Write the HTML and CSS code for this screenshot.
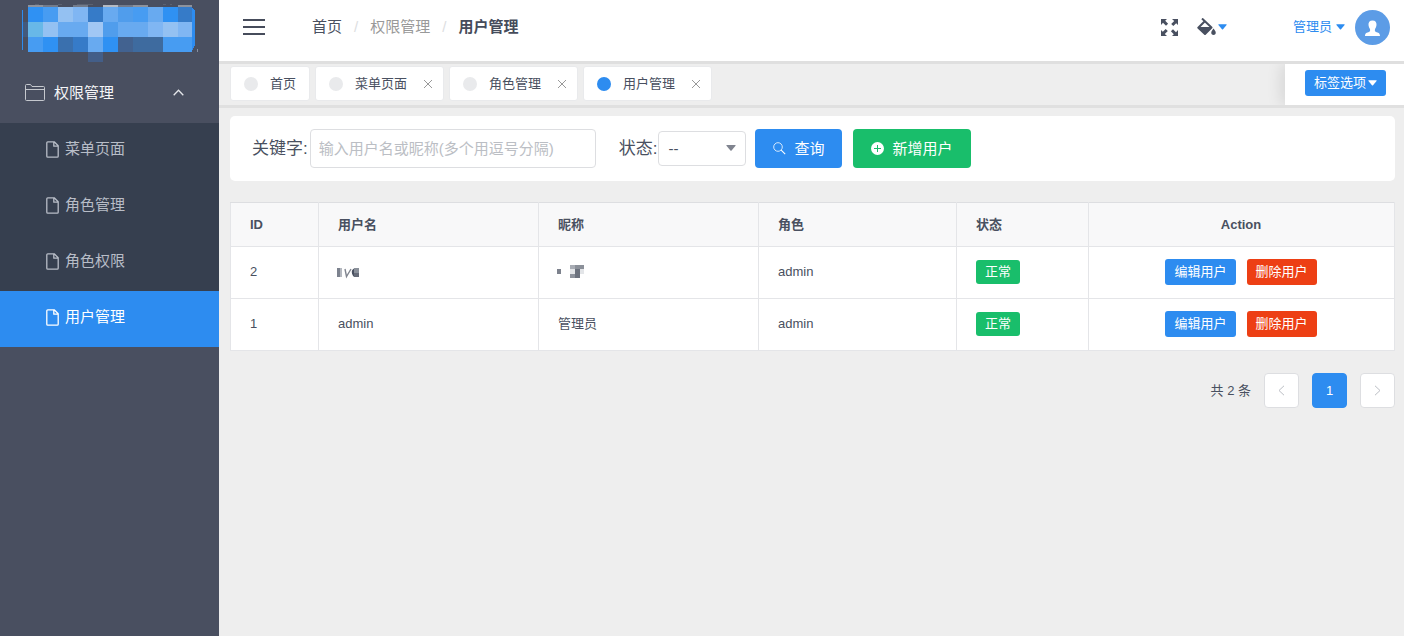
FILE: index.html
```html
<!DOCTYPE html>
<html lang="zh-CN">
<head>
<meta charset="utf-8">
<meta name="viewport" content="width=device-width, initial-scale=1">
<title>用户管理</title>
<link rel="stylesheet" href="styles.css">
</head>
<body>
<svg class="defs" width="0" height="0" aria-hidden="true">
  <symbol id="file" viewBox="0 0 13 17"><path d="M1.700.8h6.500l4 4v10.400q0 1-1 1H1.800q-1 0-1-1V1.800q0-1 1-1zM7.800.8v4.400h4.400" fill="none" stroke="currentColor" stroke-width="1.300" stroke-linejoin="round"/></symbol>
  <symbol id="caret" viewBox="0 0 10 6"><path d="M.8 0h8.400q.8 0 .3.700L5.600 5.500q-.6.600-1.200 0L.5.700Q0 0 .8 0z" fill="currentColor"/></symbol>
  <symbol id="close" viewBox="0 0 10 10"><path d="M1 1l8 8M9 1L1 9" fill="none" stroke="currentColor" stroke-width="1"/></symbol>
</svg>
<div class="layout">
  <aside class="sidebar">
    <div class="logo">
      <svg width="180" height="62" viewBox="22 0 180 62" shape-rendering="crispEdges" role="img" aria-label="logo">
        <path d="M22 10h1v40h-1zM192 7l3 4v34l-3 6z" fill="#2d8cf0"/>
        <path d="M197 49h1v3h-1z" fill="#8790a0"/>
        <path d="M35 4h4v1h-4zM58 4h4v1h-4zM77 4h16v1H77zM163 4h3v1h-3zM170 4h2v1h-2z" fill="#5b6272"/>
        <path d="M28 5h15v2H28zM133 5h15v2h-15zM178 5h14v2h-14z" fill="#8d929c"/>
        <path d="M43 5h15v2H43zM73 5h15v2H73zM118 5h15v2h-15z" fill="#737b8a"/>
        <path d="M103 5h15v2h-15z" fill="#b5bac2"/>
        <path d="M28 7h15v15H28zM163 7h15v15h-15zM103 37h15v15h-15zM43 37h15v15H43z" fill="#2f91f3"/>
        <path d="M43 7h15v15H43zM133 7h15v15h-15zM28 37h15v15H28zM163 37h29v15h-29z" fill="#479cf2"/>
        <path d="M58 7h15v15H58zM43 22h15v15H43zM163 22h15v15h-15z" fill="#94c1f2"/>
        <path d="M73 7h15v15H73zM148 22h15v15h-15zM178 22h14v15h-14z" fill="#80b6f3"/>
        <path d="M88 7h15v15H88zM178 7h14v15h-14zM73 37h15v15H73z" fill="#367bc8"/>
        <path d="M103 7h15v15h-15zM148 7h15v15h-15zM58 22h30v15H58zM118 22h30v15h-30zM88 37h15v15H88z" fill="#68aaf0"/>
        <path d="M118 7h15v15h-15zM103 22h15v15h-15z" fill="#509dec"/>
        <path d="M28 22h15v15H28z" fill="#68b8e8"/><path d="M23 22h5v15h-5z" fill="#435a7c"/>
        <path d="M88 22h15v15H88z" fill="#a1c7f4"/><path d="M58 37h15v15H58z" fill="#3a70ae"/>
        <path d="M118 37h15v15h-15z" fill="#426290"/><path d="M133 37h30v15h-30z" fill="#3e6b9f"/>
        <path d="M88 52h15v10H88z" fill="#435e88"/>
      </svg>
    </div>
    <nav>
      <button class="menu-title" type="button" aria-expanded="true">
        <svg width="20" height="17" viewBox="0 0 20 17"><path d="M.5 15.500V1.500q0-1 1-1h4l1.500 2h11.500q1 0 1 1V15.500q0 1-1 1h-17q-1 0-1-1zM.5 5.500h19" fill="none" stroke="currentColor"/></svg>
        <span>权限管理</span>
        <svg class="menu-arrow" width="11" height="7" viewBox="0 0 11 7"><path d="M.7 6.200l4.800-5 4.800 5" fill="none" stroke="currentColor" stroke-width="1.300"/></svg>
      </button>
      <ul class="submenu">
        <li><a href="#"><svg width="13" height="17"><use href="#file"/></svg>菜单页面</a></li>
        <li><a href="#"><svg width="13" height="17"><use href="#file"/></svg>角色管理</a></li>
        <li><a href="#"><svg width="13" height="17"><use href="#file"/></svg>角色权限</a></li>
        <li><a href="#" class="active" aria-current="page"><svg width="13" height="17"><use href="#file"/></svg>用户管理</a></li>
      </ul>
    </nav>
  </aside>

  <div class="main">
    <header class="header">
      <button class="icon-btn" type="button" aria-label="折叠菜单">
        <svg width="22" height="16" viewBox="0 0 22 16"><path d="M0 1h22M0 8h22M0 15h22" stroke="#464c5b" stroke-width="2"/></svg>
      </button>
      <nav class="breadcrumb" aria-label="面包屑">
        <a href="#" class="crumb-link">首页</a><span class="sep">/</span><span class="crumb">权限管理</span><span class="sep">/</span><strong>用户管理</strong>
      </nav>
      <div class="tools">
        <button class="icon-btn" type="button" aria-label="全屏">
          <svg width="17" height="17" viewBox="0 0 17 17" fill="#495060"><path id="c" d="M0 0h6L4.200 1.800l2.900 2.900-2.100 2.100-3-3L0 6z"/><use href="#c" transform="rotate(90 8.500 8.500)"/><use href="#c" transform="rotate(180 8.500 8.500)"/><use href="#c" transform="rotate(270 8.500 8.500)"/></svg>
        </button>
        <button class="icon-btn theme" type="button" aria-label="主题">
          <svg width="20" height="18" viewBox="0 0 20 18"><path d="M5 .5L14.500 9.500 8 16 1.300 9.700l6-6" fill="none" stroke="#495060" stroke-width="2" stroke-linejoin="round"/><path d="M1 9h13.500L8 16.500z" fill="#495060"/><path d="M16.500 10.500q3 3.500 2 5.400-2 2-4 0-1-1.900 2-5.400z" fill="#495060"/></svg>
          <svg class="blue" width="9" height="6"><use href="#caret"/></svg>
        </button>
        <button class="user" type="button">管理员<svg width="9" height="6"><use href="#caret"/></svg></button>
        <svg class="avatar" width="35" height="35" viewBox="0 0 35 35"><circle cx="17.500" cy="17.500" r="17.500" fill="#5c9ce6"/><path d="M17.500 10.500c3 0 4.200 2 4 4.500-.2 2-1 3-1.500 4.200-.3 1.500-.1 2.300 1 2.800 2 .8 4 .8 4 4H10c0-3.200 2-3.200 4-4 1.100-.5 1.300-1.300 1-2.800-.5-1.200-1.300-2.200-1.500-4.200-.2-2.500 1-4.500 4-4.500z" fill="#fff"/></svg>
      </div>
    </header>

    <div class="tabbar">
      <div class="tabs">
        <div class="tab"><span class="dot"></span><a href="#">首页</a></div>
        <div class="tab"><span class="dot"></span><a href="#">菜单页面</a><button type="button" aria-label="关闭菜单页面"><svg width="10" height="10"><use href="#close"/></svg></button></div>
        <div class="tab"><span class="dot"></span><a href="#">角色管理</a><button type="button" aria-label="关闭角色管理"><svg width="10" height="10"><use href="#close"/></svg></button></div>
        <div class="tab"><span class="dot on"></span><a href="#">用户管理</a><button type="button" aria-label="关闭用户管理"><svg width="10" height="10"><use href="#close"/></svg></button></div>
      </div>
      <div class="tab-options"><button class="btn small primary" type="button">标签选项<svg width="9" height="6"><use href="#caret"/></svg></button></div>
    </div>

    <main class="content">
      <form class="search">
        <label for="kw">关键字:</label>
        <input id="kw" type="text" placeholder="输入用户名或昵称(多个用逗号分隔)">
        <label class="state-label" for="state">状态:</label>
        <span class="select"><select id="state"><option>--</option></select><svg width="10" height="6"><use href="#caret"/></svg></span>
        <button class="btn large primary" type="button"><svg width="13" height="13" viewBox="0 0 13 13"><circle cx="5" cy="5" r="4.300" fill="none" stroke="currentColor" stroke-width=".8"/><path d="M8.200 8.200l4 4" stroke="currentColor" stroke-width="1.100"/></svg>查询</button>
        <button class="btn large success" type="button"><svg width="13" height="13" viewBox="0 0 13 13"><circle cx="6.500" cy="6.500" r="6.500" fill="#fff"/><path d="M6.500 3v7M3 6.500h7" stroke="#19be6b" stroke-width="1"/></svg>新增用户</button>
      </form>

      <table class="table">
        <colgroup><col class="c-id"><col class="c-name"><col class="c-name"><col class="c-role"><col class="c-state"><col></colgroup>
        <thead><tr><th>ID</th><th>用户名</th><th>昵称</th><th>角色</th><th>状态</th><th class="center">Action</th></tr></thead>
        <tbody>
          <tr>
            <td>2</td>
            <td><svg class="mask" width="24" height="14" viewBox="0 0 24 14"><path d="M0 3h3v9H0z" fill="#7c828e"/><path d="M3 3h2v9H3z" fill="#b4b8bf"/><path d="M8 4l1.500 7.500L14 4" fill="none" stroke="#80858f" stroke-width="1.400"/><path d="M17 3.500q-3 1.500-2 5t3 3.500z" fill="#495060"/><path d="M17 3h5v5h-5z" fill="#8a909a"/><path d="M17 8h5v4h-5z" fill="#656b78"/></svg></td>
            <td><svg class="mask" width="28" height="16" viewBox="0 0 28 16" shape-rendering="crispEdges"><path d="M0 5h4v5H0z" fill="#7d828d"/><path d="M13 1h5v4h-5z" fill="#a8acb4"/><path d="M18 1h9v4h-9z" fill="#8b9099"/><path d="M13 5h5v5h-5zM23 5h4v5h-4z" fill="#e3e5e8"/><path d="M18 5h5v9h-5z" fill="#6b717d"/><path d="M13 10h5v4h-5z" fill="#8d929c"/></svg></td>
            <td>admin</td><td><span class="tag">正常</span></td>
            <td><div class="actions"><button class="btn small primary" type="button">编辑用户</button><button class="btn small error" type="button">删除用户</button></div></td>
          </tr>
          <tr>
            <td>1</td><td>admin</td><td>管理员</td><td>admin</td><td><span class="tag">正常</span></td>
            <td><div class="actions"><button class="btn small primary" type="button">编辑用户</button><button class="btn small error" type="button">删除用户</button></div></td>
          </tr>
        </tbody>
      </table>

      <nav class="pager" aria-label="分页">
        <span>共 2 条</span>
        <button type="button" aria-label="上一页" disabled><svg width="7" height="11" viewBox="0 0 7 11"><path d="M6 .8L1 5.500l5 4.700" fill="none" stroke="currentColor"/></svg></button>
        <button type="button" class="current">1</button>
        <button type="button" aria-label="下一页" disabled><svg width="7" height="11" viewBox="0 0 7 11"><path d="M1 .8l5 4.700-5 4.700" fill="none" stroke="currentColor"/></svg></button>
      </nav>
    </main>
  </div>
</div>
</body>
</html>
```
FILE: styles.css
```css
* { box-sizing: border-box; }
body {
  margin: 0;
  color: #495060;
  background: #eee;
  font: 13px/20px "Liberation Sans", "Noto Sans CJK SC", sans-serif;
}
button, input, select { font: inherit; color: inherit; margin: 0; }
button { border: 0; padding: 0; background: none; cursor: pointer; }
a { color: inherit; text-decoration: none; }
ul { list-style: none; margin: 0; padding: 0; }
svg { display: block; flex: none; }
.defs { position: absolute; }

.layout { display: flex; min-height: 100vh; }
.sidebar { flex: 0 0 219px; background: #494f60; }
.logo { height: 62px; padding-left: 22px; }
.menu-title {
  display: flex;
  align-items: center;
  width: 100%;
  height: 61px;
  padding: 0 35px 0 25px;
  gap: 9px;
  color: #f5f6f8;
  font-size: 15px;
}
.menu-title svg { color: #c5c8ce; }
.menu-title .menu-arrow { margin-left: auto; color: #e4e6ea; }
.submenu { background: #363f4f; }
.submenu a {
  display: flex;
  align-items: center;
  gap: 6px;
  height: 56px;
  padding: 0 46px 4px;
  color: #b8bdc7;
  font-size: 15px;
}
.submenu .active { background: #2d8cf0; color: #fff; }

.main { flex: 1; min-width: 0; }
.header {
  display: flex;
  align-items: center;
  height: 61px;
  padding: 0 14px 7px 24px;
  background: #fff;
}
.icon-btn { display: flex; align-items: center; }
.breadcrumb {
  display: flex;
  gap: 12px;
  margin-left: 47px;
  font-size: 15px;
}
.crumb { color: #999; }
.breadcrumb strong { color: #464c5b; font-weight: 700; }
.sep { color: #dddee1; }
.tools { display: flex; align-items: center; margin-left: auto; }
.theme { gap: 1px; margin: 0 66px 0 19px; }
.blue { color: #2d8cf0; }
.user { display: flex; align-items: center; gap: 4px; color: #2d8cf0; }
.avatar { margin-left: 10px; }

.tabbar {
  display: flex;
  height: 47px;
  border-top: 3px solid #dfdfdf;
  border-bottom: 3px solid #e0e0e0;
  background: #eee;
}
.tabs { display: flex; flex: 1; min-width: 0; gap: 5px; padding: 2px 0 0 11px; }
.tab {
  display: flex;
  align-items: center;
  height: 35px;
  padding: 0 13px;
  border: 1px solid #e9eaec;
  border-radius: 3px;
  background: #fff;
}
.dot { width: 14px; height: 14px; margin-right: 12px; border-radius: 50%; background: #e9eaec; }
.dot.on { background: #2d8cf0; }
.tab button { margin: 0 -3px 0 16px; color: #999; }
.tab-options {
  display: flex;
  align-items: center;
  padding: 0 18px 3px 20px;
  background: #fff;
  box-shadow: -4px 0 15px rgba(0, 0, 0, .1);
  clip-path: inset(0 0 0 -30px);
}

.btn {
  display: flex;
  align-items: center;
  justify-content: center;
  border-radius: 4px;
  color: #fff;
}
.small { height: 26px; gap: 2px; padding: 0 9px; border-radius: 3px; }
.large { height: 39px; gap: 8px; padding: 0 18px; font-size: 15px; }
.primary { background: #2d8cf0; }
.success { background: #19be6b; margin-left: 11px; }
.error { background: #ed3f14; }

.content { padding: 8px 9px 20px 11px; }
.search {
  display: flex;
  align-items: center;
  height: 65px;
  margin-bottom: 21px;
  padding: 0 22px;
  border-radius: 5px;
  background: #fff;
}
.search label { font-size: 17px; line-height: 24px; white-space: nowrap; }
.search input {
  width: 286px;
  height: 39px;
  margin-left: 2px;
  padding: 0 8px;
  border: 1px solid #dddee1;
  border-radius: 4px;
  font-size: 15px;
}
.search input::placeholder { color: #bbbec4; }
.search .state-label { margin-left: 23px; }
.select { position: relative; margin: 0 9px 0 1px; }
.select select {
  display: block;
  appearance: none;
  width: 88px;
  height: 35px;
  padding: 0 9px;
  border: 1px solid #dddee1;
  border-radius: 4px;
  background: #fff;
  font-size: 15px;
}
.select svg { position: absolute; right: 10px; top: 14px; color: #80848f; pointer-events: none; }

.table {
  width: 100%;
  table-layout: fixed;
  border-collapse: collapse;
  border: 1px solid #dddee1;
  background: #fff;
}
.c-id { width: 88px; }
.c-name { width: 220px; }
.c-role { width: 198px; }
.c-state { width: 132px; }
.table th, .table td { padding: 0 20px 0 19px; border: 1px solid #e4e5e8; text-align: left; }
.table th { height: 44px; background: #f8f8f9; }
.table td { height: 52px; padding-bottom: 1px; }
.table .center { text-align: center; }
.table thead th { border-top-color: #dddee1; }
.mask { margin-left: -1px; }
.tag {
  display: inline-block;
  padding: 2px 9px;
  border-radius: 3px;
  background: #19be6b;
  color: #fff;
  vertical-align: middle;
}
.actions { display: flex; justify-content: center; gap: 11px; }

.pager {
  display: flex;
  align-items: center;
  justify-content: flex-end;
  gap: 13px;
  margin-top: 22px;
}
.pager button {
  display: flex;
  align-items: center;
  justify-content: center;
  width: 35px;
  height: 35px;
  border: 1px solid #dddee1;
  border-radius: 4px;
  background: #fff;
  color: #bbbec4;
}
.pager .current { border-color: #2d8cf0; background: #2d8cf0; color: #fff; }
```
